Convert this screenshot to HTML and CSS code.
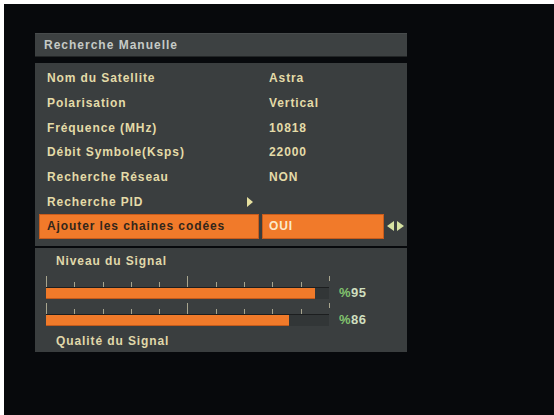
FILE: index.html
```html
<!DOCTYPE html>
<html lang="fr">
<head>
<meta charset="utf-8">
<title>Recherche Manuelle</title>
<link rel="stylesheet" href="styles.css">
</head>
<body>
<div class="screen">
  <div class="menu">
    <div class="title">Recherche Manuelle</div>
    <div class="panel list">
      <div class="row"><div class="cell label">Nom du Satellite</div><div class="cell value">Astra</div></div>
      <div class="row"><div class="cell label">Polarisation</div><div class="cell value">Vertical</div></div>
      <div class="row"><div class="cell label">Fréquence (MHz)</div><div class="cell value">10818</div></div>
      <div class="row"><div class="cell label">Débit Symbole(Ksps)</div><div class="cell value">22000</div></div>
      <div class="row"><div class="cell label">Recherche Réseau</div><div class="cell value">NON</div></div>
      <div class="row"><div class="cell label">Recherche PID<svg class="tri" width="6" height="10" viewBox="0 0 6 10"><polygon points="0,0 6,5 0,10"/></svg></div><div class="cell value"></div></div>
      <div class="row active"><div class="cell label">Ajouter les chaines codées</div><div class="cell value">OUI</div><svg class="lr" width="18" height="10" viewBox="0 0 18 10"><polygon points="7,0 0,5 7,10"/><polygon points="10,0 17,5 10,10"/></svg></div>
    </div>
    <div class="panel signal">
      <div class="sig-label">Niveau du Signal</div>
      <div class="meter">
        <div class="gauge">
          <div class="ticks"><i class="major"></i><i></i><i></i><i></i><i></i><i class="major"></i><i></i><i></i><i></i><i></i><i class="end"></i></div>
          <div class="track"><div class="fill" style="width:95%"></div></div>
        </div>
        <div class="pct"><span class="sign">%</span>95</div>
      </div>
      <div class="meter second">
        <div class="gauge">
          <div class="ticks"><i class="major"></i><i></i><i></i><i></i><i></i><i class="major"></i><i></i><i></i><i></i><i></i><i class="end"></i></div>
          <div class="track"><div class="fill" style="width:86%"></div></div>
        </div>
        <div class="pct"><span class="sign">%</span>86</div>
      </div>
      <div class="sig-label bottom">Qualité du Signal</div>
    </div>
  </div>
</div>
</body>
</html>
```

FILE: styles.css
```css
html, body {
  margin: 0;
  padding: 0;
  background: #ffffff;
}

body {
  font-family: "Liberation Sans", Arial, sans-serif;
  font-weight: bold;
  font-size: 12px;
}

.screen {
  margin: 4px 0 0 4px;
  width: 550px;
  height: 411px;
  background: #07090c;
  padding: 29px 0 0 31px;
  box-sizing: border-box;
}

.menu {
  width: 372px;
  display: flex;
  flex-direction: column;
}

.title {
  height: 24px;
  box-sizing: border-box;
  background: #3d4142;
  border-top: 1px solid #474b4c;
  border-bottom: 1px solid #222526;
  padding-left: 9px;
  display: flex;
  align-items: center;
  color: #c6cac6;
  letter-spacing: 1px;
}

.panel {
  background: #3a3e3f;
  box-sizing: border-box;
}

.list {
  margin-top: 6px;
  height: 183px;
  padding-top: 3px;
  display: flex;
  flex-direction: column;
}

.row {
  height: 24.67px;
  display: grid;
  grid-template-columns: 220px 122px 18px;
  column-gap: 3px;
  padding-left: 4px;
  align-items: center;
}

.cell {
  height: 24.67px;
  box-sizing: border-box;
  display: flex;
  align-items: center;
  color: #e4dba8;
  letter-spacing: 0.9px;
  white-space: nowrap;
}

.label {
  padding-left: 8px;
  justify-content: space-between;
  padding-right: 6px;
}

.value {
  padding-left: 7px;
}

.tri {
  fill: #e6e0a0;
}

.row.active .cell {
  background: #f17a2a;
  border: 1px solid #c95c1c;
}

.row.active .label {
  color: #33261a;
  padding-left: 7px;
}

.row.active .value {
  color: #fbeacc;
  padding-left: 6px;
}

.lr {
  fill: #d6e2a2;
}

.signal {
  margin-top: 2px;
  height: 104px;
  padding: 5px 0 0 11px;
  display: flex;
  flex-direction: column;
}

.sig-label {
  height: 16px;
  line-height: 16px;
  padding-left: 10px;
  color: #e0d8aa;
  letter-spacing: 0.9px;
}

.sig-label.bottom {
  margin-top: 7px;
}

.meter {
  margin-top: 7px;
  display: flex;
  align-items: flex-end;
}

.meter.second {
  margin-top: 4px;
}

.gauge {
  width: 284px;
  display: flex;
  flex-direction: column;
}

.ticks {
  height: 11px;
  display: flex;
  justify-content: space-between;
  align-items: flex-end;
}

.ticks i {
  width: 1px;
  height: 5px;
  background: #a8a58e;
}

.ticks i.major {
  height: 11px;
}

.ticks i.end {
  height: 5px;
  align-self: flex-start;
}

.track {
  width: 283px;
  height: 12px;
  box-sizing: border-box;
  background: #323637;
  border-top: 1px solid #1c1e1f;
  display: flex;
}

.fill {
  height: 100%;
  background: #f07a2a;
  box-shadow: inset 0 -1px 0 #c25a1c;
}

.pct {
  margin-left: 9px;
  height: 12px;
  line-height: 12px;
  font-size: 13px;
  color: #cfdfbf;
  letter-spacing: 0.5px;
}

.pct .sign {
  color: #82c46e;
}
```
